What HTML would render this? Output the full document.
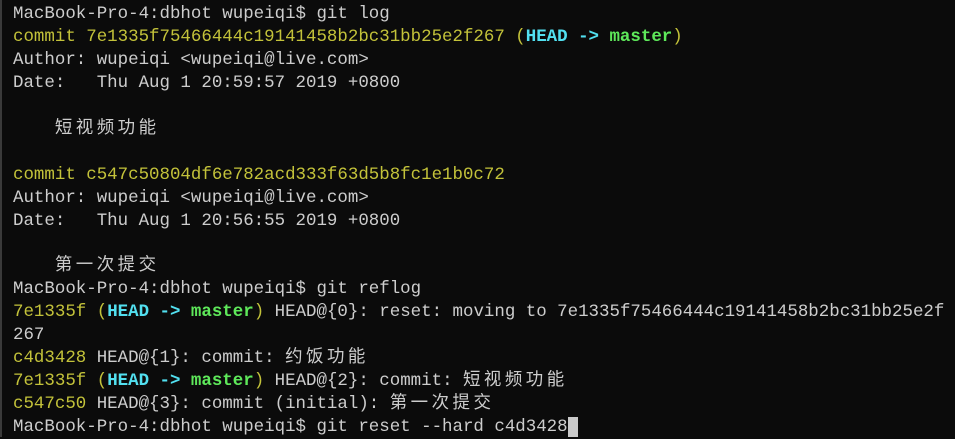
<!DOCTYPE html>
<html><head><meta charset="utf-8"><style>
html,body{margin:0;padding:0;background:#0b0b0b;width:955px;height:437px;overflow:hidden}
body{border-left:2px solid #3a3a3a;box-sizing:border-box}
pre{margin:0;position:absolute;left:13px;top:3px;font-family:"Liberation Mono","Noto Sans CJK SC",monospace;font-size:17.45px;line-height:22.95px;color:#cdcdcd}
.y{color:#c3c23a}.c{color:#52e0f0;font-weight:bold}.g{color:#5ee85a;font-weight:bold}
.z{letter-spacing:3.5px}
.cur{background:#c9c9c9}
</style></head><body><pre>MacBook-Pro-4:dbhot wupeiqi$ git log
<span class="y">commit 7e1335f75466444c19141458b2bc31bb25e2f267 (</span><span class="c">HEAD -&gt; </span><span class="g">master</span><span class="y">)</span>
Author: wupeiqi &lt;wupeiqi@live.com&gt;
Date:   Thu Aug 1 20:59:57 2019 +0800

    <span class="z">短视频功能</span>

<span class="y">commit c547c50804df6e782acd333f63d5b8fc1e1b0c72</span>
Author: wupeiqi &lt;wupeiqi@live.com&gt;
Date:   Thu Aug 1 20:56:55 2019 +0800

    <span class="z">第一次提交</span>
MacBook-Pro-4:dbhot wupeiqi$ git reflog
<span class="y">7e1335f (</span><span class="c">HEAD -&gt; </span><span class="g">master</span><span class="y">)</span> HEAD@{0}: reset: moving to 7e1335f75466444c19141458b2bc31bb25e2f
267
<span class="y">c4d3428</span> HEAD@{1}: commit: <span class="z">约饭功能</span>
<span class="y">7e1335f (</span><span class="c">HEAD -&gt; </span><span class="g">master</span><span class="y">)</span> HEAD@{2}: commit: <span class="z">短视频功能</span>
<span class="y">c547c50</span> HEAD@{3}: commit (initial): <span class="z">第一次提交</span>
MacBook-Pro-4:dbhot wupeiqi$ git reset --hard c4d3428<span class="cur"> </span></pre></body></html>
